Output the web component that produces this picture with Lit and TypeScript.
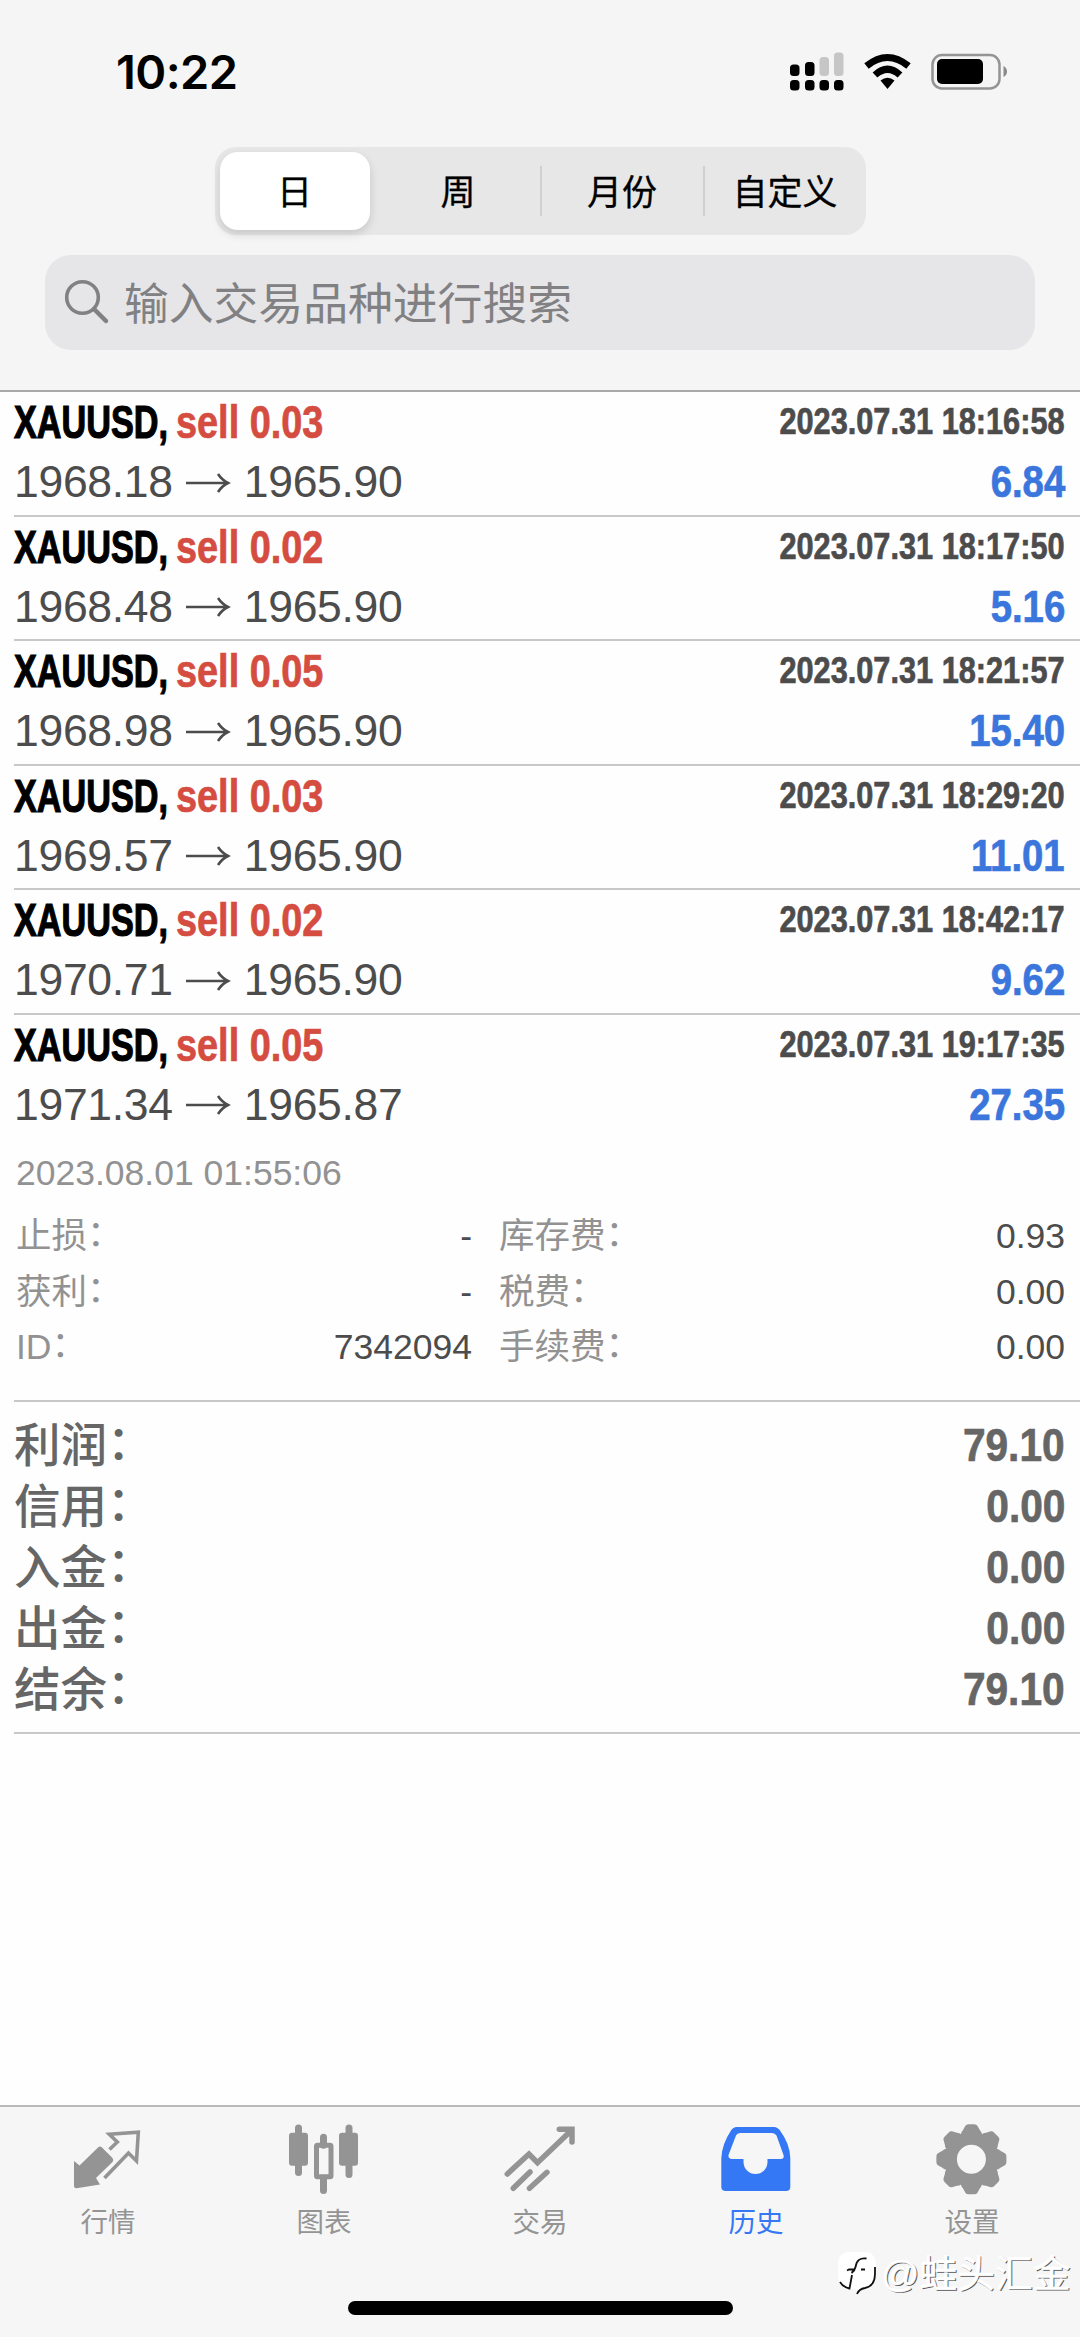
import { LitElement, html, css, svg } from "lit";
import { customElement } from "lit/decorators.js";

interface Deal { lot: string; open: string; close: string; time: string; profit: string; }

const DEALS: Deal[] = [
  { lot: "0.03", open: "1968.18", close: "1965.90", time: "2023.07.31 18:16:58", profit: "6.84" },
  { lot: "0.02", open: "1968.48", close: "1965.90", time: "2023.07.31 18:17:50", profit: "5.16" },
  { lot: "0.05", open: "1968.98", close: "1965.90", time: "2023.07.31 18:21:57", profit: "15.40" },
  { lot: "0.03", open: "1969.57", close: "1965.90", time: "2023.07.31 18:29:20", profit: "11.01" },
  { lot: "0.02", open: "1970.71", close: "1965.90", time: "2023.07.31 18:42:17", profit: "9.62" },
  { lot: "0.05", open: "1971.34", close: "1965.87", time: "2023.07.31 19:17:35", profit: "27.35" },
];
const DETAILS = [
  ["止损", "-", "库存费", "0.93"],
  ["获利", "-", "税费", "0.00"],
  ["ID", "7342094", "手续费", "0.00"],
];
const TOTALS = [["利润", "79.10"], ["信用", "0.00"], ["入金", "0.00"], ["出金", "0.00"], ["结余", "79.10"]];

// One gear tooth, pointing up from the centre (0, 0).
const TOOTH = "M-11 -20 L-10 -27 L-8.500 -29 L-6 -33.500 Q-5 -35 -3 -35 H3 Q5 -35 6 -33.500 L8.500 -29 L10 -27 L11 -20 Z";
const ICONS = [
  svg`<path fill="currentColor" d="M26 25.500 Q28 23.500 30 25.500 L40.500 36 Q42 38 40.500 40 L24 56 L28 62.500 L4.500 66.300 Q2 66.500 2 64 V39 L7.500 43.500 Z"/>
    <path d="M37.500 27.500 L45.300 20 L37.300 12.300 L66.300 10.300 L64.500 39 L56.500 31 L32.500 56" fill="none" stroke="currentColor" stroke-width="3.600"/>`,
  svg`<g fill="currentColor"><rect x="1" y="10.700" width="19" height="33" rx="3"/><rect x="7" y="2.500" width="7" height="51.500" rx="3.500"/>
    <rect x="51" y="10.700" width="19" height="33" rx="3"/><rect x="57.500" y="2.500" width="7" height="53.500" rx="3.500"/>
    <rect x="32" y="11.700" width="7" height="15" rx="3.500"/><rect x="32" y="54" width="7" height="18" rx="3.500"/></g>
    <rect x="28.500" y="23.200" width="14.500" height="31.500" rx="1" fill="none" stroke="currentColor" stroke-width="5"/>`,
  svg`<path d="M3.300 52 L25 32 L33.500 40.700 L67 8.700 M55.300 7.300 H68 V20 M9.300 66.300 L26 50 M25.500 66.300 L43 50.300" fill="none" stroke="currentColor" stroke-width="5.500" stroke-linecap="round"/>`,
  svg`<path fill-rule="evenodd" fill="currentColor" d="M17 5 H54 Q57.500 5 60 8.500 Q70 22 70.300 36 V65 Q70.300 69 66 69 H6 Q1.300 69 1.300 65 V36 Q2 22 11 8.500 Q13 5 17 5 Z M20 11 Q17 11 16 13.500 L8.500 33 Q8 37 12 37 H23.500 V40 A12 12 0 0 0 47.500 40 V37 H61 Q64.500 37 63.500 33 L56.500 13.500 Q55 11 52 11 Z"/>`,
  svg`<g transform="translate(35.400 37.300)"><g fill="currentColor">${[0, 45, 90, 135, 180, 225, 270, 315].map(a => svg`<path d=${TOOTH} transform="rotate(${a})"/>`)}</g>
    <circle r="21" fill="none" stroke="currentColor" stroke-width="13"/></g>`,
];
const TABS = ["行情", "图表", "交易", "历史", "设置"];

@customElement("app-root")
export class AppRoot extends LitElement {
  static styles = css`
    :host { display: block; width: 1080px; height: 2337px; overflow: hidden; background: #fefefe;
      font-family: "Liberation Sans", "Noto Sans CJK SC", sans-serif; position: relative; }
    * { box-sizing: border-box; }
    svg { display: block; overflow: visible; flex: none; }
    .screen { display: flex; flex-direction: column; height: 2337px; }
    .head { height: 392px; background: #f5f5f5; border-bottom: 2px solid #a9a9ac; display: flex; flex-direction: column; align-items: center; flex: none; }
    .status { width: 100%; height: 147px; padding: 46px 72px 0 116px; display: flex; justify-content: space-between; align-items: flex-start; }
    .status svg { margin-top: 6px; }
    .clock { font: 600 47px/52px Inter, sans-serif; color: #000; letter-spacing: -0.6px; }
    .seg { width: 651px; height: 88px; border-radius: 21px; background: #e7e7e8; display: flex; align-items: center; padding: 0 0 0 5px; }
    .seg div { font: 400 35px/50px "Noto Sans CJK SC", sans-serif; text-align: center; width: 163px; color: #000; -webkit-text-stroke: 0.3px #000; }
    .seg span { display: inline-block; transform: translateY(-1.5px); }
    .seg .on { width: 150px; height: 78px; line-height: 75px; border-radius: 18px; background: #fff; box-shadow: 0 4px 10px rgba(0,0,0,.14); margin-right: 7px; }
    .seg .split { border-left: 2px solid #d0d0d2; }
    .search { margin-top: 20px; width: 990px; height: 95px; border-radius: 26px; background: #e6e6e8; display: flex; align-items: center; padding: 0 0 3px 20px; gap: 16px; color: #818184; font: 400 44.8px/60px "Noto Sans CJK SC", sans-serif; }
    .deal { height: 124.55px; margin-left: 14px; padding-right: 15px; border-bottom: 2px solid #c8c8ca; flex: none; }
    .deal.last { border-color: transparent; }
    .line { display: flex; justify-content: space-between; align-items: baseline; }
    .bold { font-family: "Liberation Sans", sans-serif; font-weight: 700; white-space: nowrap; display: inline-block; transform-origin: 100% 50%; -webkit-text-stroke: .7px currentColor; }
    .line.top { height: 64px; padding-top: 6px; line-height: 50px; }
    .line.low { height: 58px; line-height: 50px; }
    .title { display: flex; font-size: 45.5px; }
    .sym { width: 162px; color: #000; transform-origin: 0 50%; transform: scaleX(.752); -webkit-text-stroke-width: 1.2px; }
    .sell { color: #d54c40; transform-origin: 0 50%; transform: scaleX(.832); }
    .time { font-size: 37px; color: #4c4c4c; transform: translateY(-4px) scaleX(.83); }
    .price { font-size: 44.5px; color: #4c4c4c; display: flex; align-items: center; letter-spacing: -.3px; }
    .price svg { margin: 1px 14px 0 13px; }
    .profit { font-size: 44.8px; color: #3a76dc; transform: scaleX(.855); }
    .more { margin-left: 14px; height: 263px; border-bottom: 2px solid #c8c8ca; padding: 10px 15px 0 2px; font-size: 35.5px; color: #929292; flex: none; }
    .stamp { height: 60px; line-height: 48px; }
    .grid { display: grid; grid-template-columns: 456px 566px; column-gap: 27px; }
    .cell { display: flex; justify-content: space-between; height: 55.4px; line-height: 55px; }
    .cell b { font-weight: 400; color: #4c4c4c; }
    .colon { display: inline-block; transform: translateY(-.06em); }
    .totals { margin-left: 14px; height: 332px; padding: 9px 15px 0 0; border-bottom: 2px solid #c8c8ca; color: #666; flex: none; }
    .total { display: flex; justify-content: space-between; font: 500 46.5px/61px "Noto Sans CJK SC", sans-serif; height: 61px; }
    .total .bold { font-size: 47px; line-height: 68px; transform: scaleX(.865); }
    .space { flex: 1; }
    .tabs { height: 232px; background: #f6f6f6; border-top: 2px solid #b9b9bb; flex: none; display: flex; flex-direction: column; align-items: center; }
    .row { display: flex; width: 1080px; height: 194px; }
    .tab { flex: 1; display: flex; flex-direction: column; align-items: center; padding-top: 15px; color: #949494; font: 400 27.5px/40px "Noto Sans CJK SC", sans-serif; gap: 6px; }
    .tab.active { color: #3478f6; }
    .home { width: 385px; height: 14px; border-radius: 7px; background: #000; }
    .mark { position: absolute; left: 838px; top: 2250px; display: flex; align-items: center; gap: 5px; color: #fff; font: 400 37.8px/48px "Liberation Sans", "Noto Sans CJK SC", sans-serif; text-shadow: 1.2px 1.2px 0 #555; -webkit-text-stroke: .5px #fff; white-space: nowrap; }
  `;

  private label(text: string) {
    return html`<span>${text}<span class="colon">：</span></span>`;
  }

  render() {
    return html`<div class="screen">
      <div class="head">
        <div class="status"><span class="clock">10:22</span>
          <svg width="218" height="40" viewBox="790 52 218 40">
            <g fill="#000"><rect x="790" y="64.500" width="9.500" height="11.500" rx="3.500"/><rect x="805" y="62" width="9.500" height="14" rx="3.500"/>
            ${[790, 805, 819.5, 834].map(x => svg`<rect x=${x} y="80" width="9.500" height="10.500" rx="3.500"/>`)}</g>
            <g fill="#c6c6c6"><rect x="819.500" y="57" width="9.500" height="19" rx="3.500"/><rect x="834" y="52.500" width="9.500" height="23.500" rx="3.500"/></g>
            <g fill="none" stroke="#000" stroke-width="7"><path d="M866.500 66 Q887.500 49 908.500 66"/><path d="M875 75 Q887.500 63.500 900 75"/></g>
            <path d="M880.500 80.500 Q887.500 75 894.500 80.500 L887.500 89 Z"/>
            <rect x="932.500" y="55" width="67" height="33.500" rx="9.500" fill="none" stroke="#949494" stroke-width="2.500"/>
            <rect x="937" y="59" width="46" height="25" rx="5"/><path d="M1003.500 66 Q1007 68 1007 71.500 Q1007 75 1003.500 77 Z" fill="#8a8a8a"/>
          </svg></div>
        <div class="seg"><div class="on">日</div><div><span>周</span></div><div class="split"><span>月份</span></div><div class="split"><span>自定义</span></div></div>
        <div class="search"><svg width="43" height="43" viewBox="0 0 43 43" fill="none" stroke="currentColor"><circle cx="17.500" cy="17.500" r="15.800" stroke-width="3.600"/><path d="M29 29 L41 41" stroke-width="4.500" stroke-linecap="round"/></svg><span>输入交易品种进行搜索</span></div>
      </div>
      ${DEALS.map((d, i) => html`<div class="deal ${i === DEALS.length - 1 ? "last" : ""}">
        <div class="line top"><span class="title"><span class="bold sym">XAUUSD,</span><span class="bold sell">sell ${d.lot}</span></span><span class="bold time">${d.time}</span></div>
        <div class="line low"><span class="price">${d.open}<svg width="44" height="20" viewBox="0 0 44 20" fill="none" stroke="#4c4c4c" stroke-width="2.600"><path d="M0 10 H42 M32 1 Q36 7 42 10 Q36 13 32 19"/></svg>${d.close}</span><span class="bold profit">${d.profit}</span></div>
      </div>`)}
      <div class="more"><div class="stamp">2023.08.01 01:55:06</div>
        <div class="grid">${DETAILS.map(r => html`<div class="cell">${this.label(r[0])}<b>${r[1]}</b></div><div class="cell">${this.label(r[2])}<b>${r[3]}</b></div>`)}</div></div>
      <div class="totals">${TOTALS.map(t => html`<div class="total">${this.label(t[0])}<span class="bold">${t[1]}</span></div>`)}</div>
      <div class="space"></div>
      <div class="tabs"><div class="row">${TABS.map((t, i) => html`<div class="tab ${i === 3 ? "active" : ""}"><svg width="72" height="72" viewBox="0 0 72 72">${ICONS[i]}</svg><span>${t}</span></div>`)}</div><div class="home"></div></div>
      <div class="mark"><svg width="38" height="34" viewBox="0 0 38 34" fill="none">
        <path d="M12 -5 H26 Q38 -5 38 8 V19 Q38 30 28 32 Q22 33 19 38 L18.500 32 L12 32 Q0 30 0 19 V8 Q0 -5 12 -5Z" fill="#fff"/>
        <path d="M37 10 V17 Q37 29 27 31 Q21 32 19 37 M2 25 Q5 30 11.500 31.500 L14 18 M28.500 1.500 Q19 0 17.500 10 Q17 13 13.500 16 M9 13.500 L11 12.500 H17 M23 12.500 H27" stroke="#111" stroke-width="1.800"/></svg><span>@蛙头汇金</span></div>
    </div>`;
  }
}
